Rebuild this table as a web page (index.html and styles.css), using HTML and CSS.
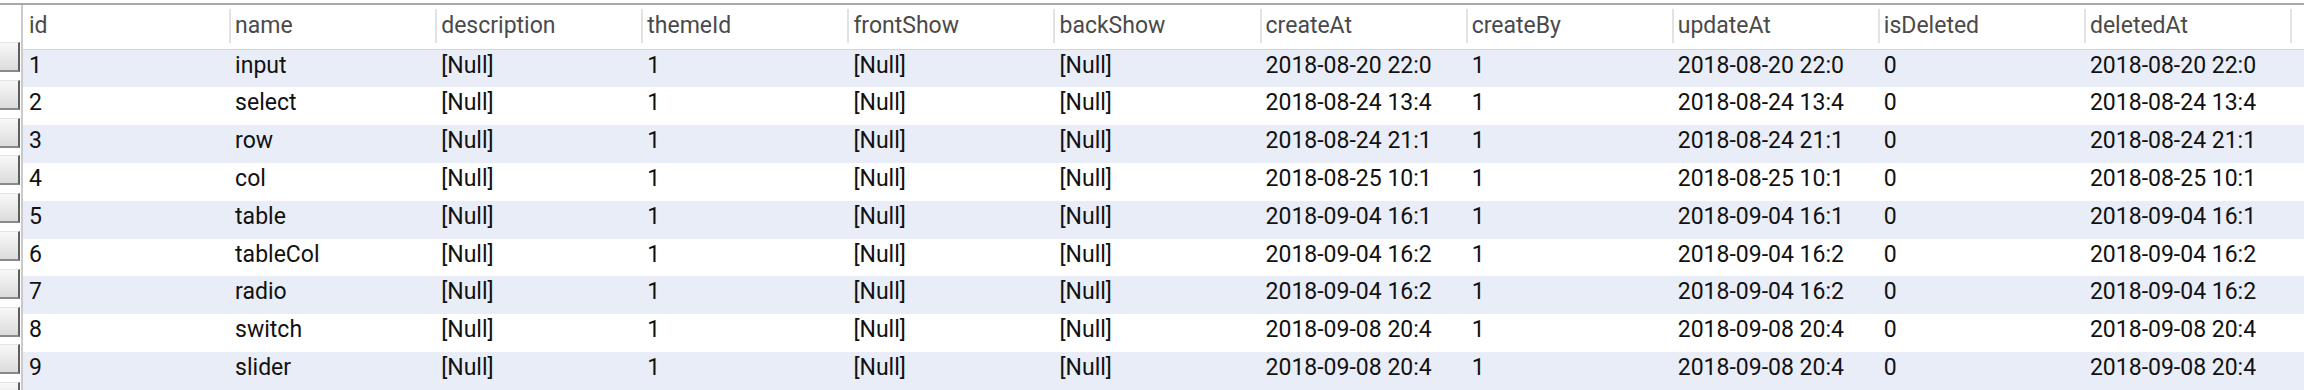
FILE: index.html
```html
<!DOCTYPE html>
<html lang="en">
<head>
  <meta charset="UTF-8" />
  <meta name="viewport" content="width=device-width, initial-scale=1.0"/>
  <title>components</title>
  <link rel="stylesheet" href="styles.css">
</head>
<body>
  <div class="sheet">
    <!-- row selector buttons on the left -->
    <div class="gutter">
      <div class="row-btn"></div>
      <div class="row-btn"></div>
      <div class="row-btn"></div>
      <div class="row-btn"></div>
      <div class="row-btn"></div>
      <div class="row-btn"></div>
      <div class="row-btn"></div>
      <div class="row-btn"></div>
      <div class="row-btn"></div>
      <div class="row-btn"></div>
    </div>

    <table class="grid">
      <thead>
        <tr>
          <th><div class="head first">id</div></th>
          <th><div class="head">name</div></th>
          <th><div class="head">description</div></th>
          <th><div class="head">themeId</div></th>
          <th><div class="head">frontShow</div></th>
          <th><div class="head">backShow</div></th>
          <th><div class="head">createAt</div></th>
          <th><div class="head">createBy</div></th>
          <th><div class="head">updateAt</div></th>
          <th><div class="head">isDeleted</div></th>
          <th><div class="head">deletedAt</div></th>
          <th class="filler"><div class="head"></div></th>
        </tr>
      </thead>
      <tbody>
        <tr>
          <td>1</td><td>input</td><td>[Null]</td><td>1</td><td>[Null]</td><td>[Null]</td>
          <td>2018-08-20 22:0</td><td>1</td><td>2018-08-20 22:0</td><td>0</td><td>2018-08-20 22:0</td><td></td>
        </tr>
        <tr>
          <td>2</td><td>select</td><td>[Null]</td><td>1</td><td>[Null]</td><td>[Null]</td>
          <td>2018-08-24 13:4</td><td>1</td><td>2018-08-24 13:4</td><td>0</td><td>2018-08-24 13:4</td><td></td>
        </tr>
        <tr>
          <td>3</td><td>row</td><td>[Null]</td><td>1</td><td>[Null]</td><td>[Null]</td>
          <td>2018-08-24 21:1</td><td>1</td><td>2018-08-24 21:1</td><td>0</td><td>2018-08-24 21:1</td><td></td>
        </tr>
        <tr>
          <td>4</td><td>col</td><td>[Null]</td><td>1</td><td>[Null]</td><td>[Null]</td>
          <td>2018-08-25 10:1</td><td>1</td><td>2018-08-25 10:1</td><td>0</td><td>2018-08-25 10:1</td><td></td>
        </tr>
        <tr>
          <td>5</td><td>table</td><td>[Null]</td><td>1</td><td>[Null]</td><td>[Null]</td>
          <td>2018-09-04 16:1</td><td>1</td><td>2018-09-04 16:1</td><td>0</td><td>2018-09-04 16:1</td><td></td>
        </tr>
        <tr>
          <td>6</td><td>tableCol</td><td>[Null]</td><td>1</td><td>[Null]</td><td>[Null]</td>
          <td>2018-09-04 16:2</td><td>1</td><td>2018-09-04 16:2</td><td>0</td><td>2018-09-04 16:2</td><td></td>
        </tr>
        <tr>
          <td>7</td><td>radio</td><td>[Null]</td><td>1</td><td>[Null]</td><td>[Null]</td>
          <td>2018-09-04 16:2</td><td>1</td><td>2018-09-04 16:2</td><td>0</td><td>2018-09-04 16:2</td><td></td>
        </tr>
        <tr>
          <td>8</td><td>switch</td><td>[Null]</td><td>1</td><td>[Null]</td><td>[Null]</td>
          <td>2018-09-08 20:4</td><td>1</td><td>2018-09-08 20:4</td><td>0</td><td>2018-09-08 20:4</td><td></td>
        </tr>
        <tr>
          <td>9</td><td>slider</td><td>[Null]</td><td>1</td><td>[Null]</td><td>[Null]</td>
          <td>2018-09-08 20:4</td><td>1</td><td>2018-09-08 20:4</td><td>0</td><td>2018-09-08 20:4</td><td></td>
        </tr>
      </tbody>
    </table>
  </div>
</body>
</html>
```

FILE: styles.css
```css
html, body {
  margin: 0;
  height: 100%;
  overflow: hidden;
  background: #fff;
}

body {
  font-family: Roboto, "Liberation Sans", sans-serif;
  font-size: 23px;
}

.sheet {
  display: flex;
  margin-top: 3px;
  border-top: 2px solid #a8a8a8;
  height: 385px;
  overflow: hidden;
}

.gutter {
  flex: none;
  width: 21px;
  border-right: 2px solid #cacaca;
  padding-top: 37px;
  display: flex;
  flex-direction: column;
  gap: 7.8px;
  overflow: hidden;
}

.row-btn {
  flex: none;
  width: 20px;
  height: 30px;
  box-sizing: border-box;
  background: linear-gradient(#f8f8f8, #dcdcdc);
  border-right: 2px solid #5e5e5e;
  border-bottom: 2px solid #8a8a8a;
  border-top: 1px solid #e4e4e4;
}

.grid {
  flex: none;
  table-layout: fixed;
  border-collapse: collapse;
  width: 2281px;
}

.grid th,
.grid td {
  width: 206.1px;
  padding: 0;
  white-space: nowrap;
  overflow: hidden;
  text-align: left;
}

.grid th.filler,
.grid td:last-child {
  width: auto;
}

.grid th {
  height: 44px;
  border-bottom: 1px solid #d6d6d6;
  font-weight: normal;
  color: #4a4a4a;
  vertical-align: top;
}

.head {
  margin-top: 4px;
  height: 34px;
  line-height: 34px;
  padding-left: 4px;
  border-left: 2px solid #e2e2e2;
}

.head.first {
  border-left-color: transparent;
}

.grid tbody tr {
  height: 37.8px;
}

.grid td {
  vertical-align: top;
  padding: 5px 0 0 6px;
  line-height: 22px;
  color: #111;
}

.grid tbody tr:nth-child(odd) {
  background: #e9edf8;
}
```
